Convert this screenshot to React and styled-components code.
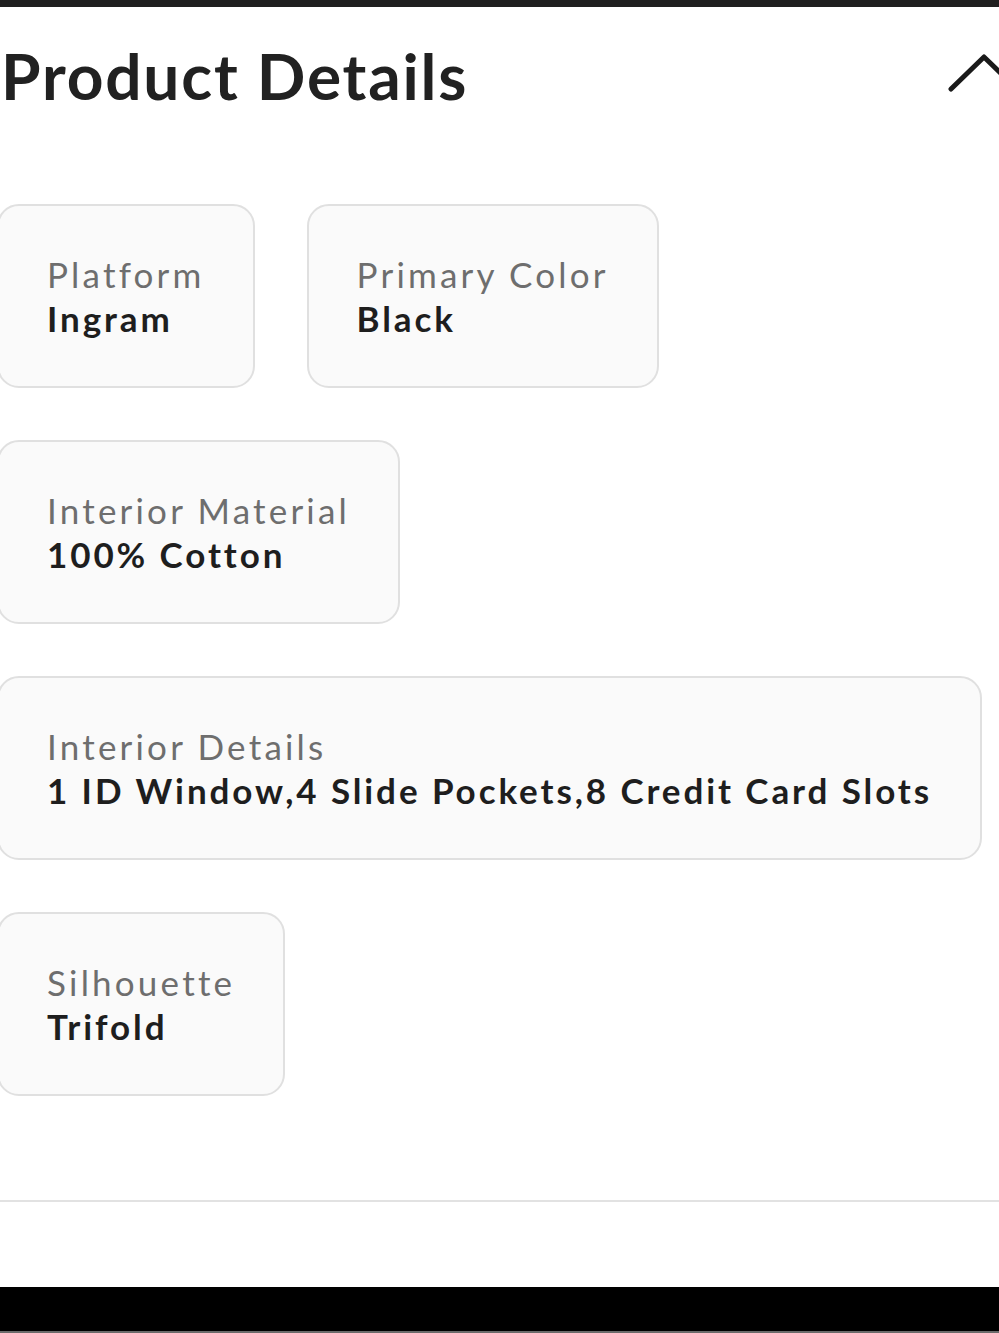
import styled, { createGlobalStyle } from "styled-components";

const Global = createGlobalStyle`
  html, body {
    margin: 0;
    padding: 0;
    background: #fff;
    overflow-x: hidden;
  }
  body {
    font-family: Lato, "Liberation Sans", sans-serif;
    color: #1e1e1e;
  }
`;

const Page = styled.div`
  min-height: 1333px;
  display: flex;
  flex-direction: column;

  .topbar {
    height: 7px;
    background: #1f1f1f;
  }

  .bottombar {
    margin-top: auto;
    height: 44px;
    background: #000;
    border-bottom: 2px solid #6a6a6a;
  }
`;

const Section = styled.section`
  margin-left: -3px;
  width: 985px;
  padding-top: 37px;
`;

const Header = styled.header`
  display: flex;
  align-items: center;
  justify-content: space-between;
  padding-left: 4px;

  h2 {
    margin: 0;
    font-size: 64px;
    line-height: 64px;
    font-weight: 700;
    letter-spacing: 1.8px;
    color: #212121;
  }

  svg {
    margin-right: -38px;
    margin-top: -5px;
  }
`;

const Grid = styled.div`
  display: flex;
  flex-wrap: wrap;
  gap: 52px 52px;
  margin-top: 96px;
`;

const Card = styled.div`
  box-sizing: border-box;
  height: 184px;
  padding: 0 48px;
  display: flex;
  flex-direction: column;
  justify-content: center;
  background: #fafafa;
  border: 2px solid #e0e0e0;
  border-radius: 22px;
  white-space: nowrap;

  .label {
    font-size: 35px;
    line-height: 44px;
    color: #6e6e6e;
    letter-spacing: 3.2px;
  }

  .value {
    font-size: 35px;
    line-height: 44px;
    font-weight: 700;
    color: #1e1e1e;
    letter-spacing: 2.9px;
  }
`;

const Divider = styled.hr`
  margin: 104px 0 0;
  border: 0;
  height: 2px;
  background: #e2e2e2;
  width: 1002px;
`;

const details = [
  { label: "Platform", value: "Ingram" },
  { label: "Primary Color", value: "Black" },
  { label: "Interior Material", value: "100% Cotton" },
  {
    label: "Interior Details",
    value: "1 ID Window,4 Slide Pockets,8 Credit Card Slots",
  },
  { label: "Silhouette", value: "Trifold" },
];

const App = () => {
  return (
    <Page>
      <Global />
      <div className="topbar" />
      <Section>
        <Header>
          <h2>Product Details</h2>
          <svg width="72" height="40" viewBox="0 0 72 40" fill="none">
            <path
              d="M3 35 L36 3 L69 35"
              stroke="#1a1a1a"
              strokeWidth="5"
              strokeLinecap="round"
              strokeLinejoin="round"
            />
          </svg>
        </Header>

        <Grid>
          {details.map((d) => (
            <Card key={d.label}>
              <span className="label">{d.label}</span>
              <span className="value">{d.value}</span>
            </Card>
          ))}
        </Grid>
      </Section>
      <Divider />
      <div className="bottombar" />
    </Page>
  );
};

export default App;
